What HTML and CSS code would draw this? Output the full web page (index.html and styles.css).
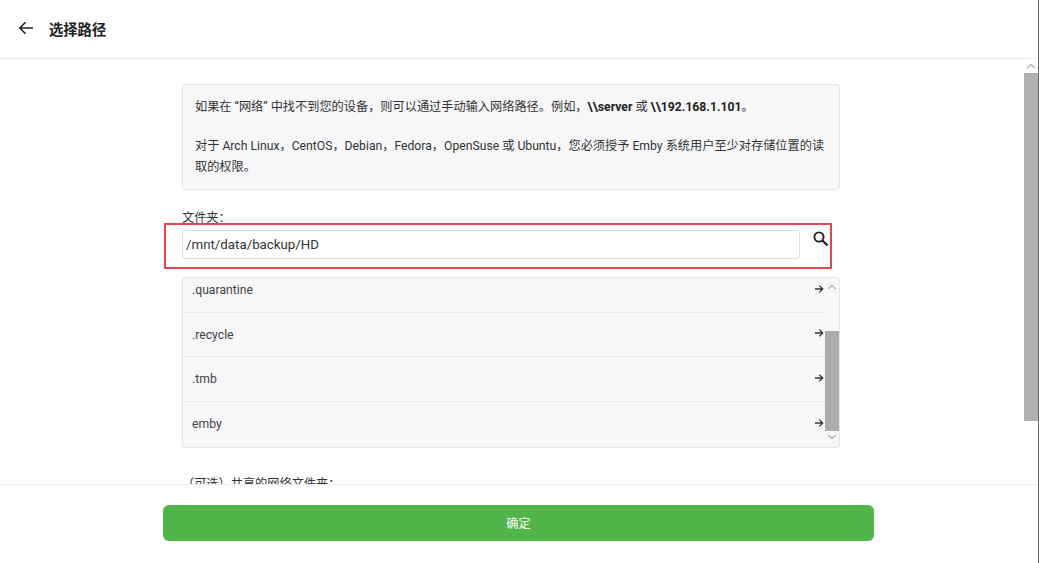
FILE: index.html
```html
<!DOCTYPE html>
<html lang="zh-CN">
<head>
<meta charset="utf-8">
<title>选择路径</title>
<link rel="stylesheet" href="styles.css">
</head>
<body>
<div class="page">
  <header class="header">
    <svg class="back" width="16" height="14" viewBox="0 0 16 14"><path d="M15 7H2M7.5 1.2 1.8 7l5.7 5.8" fill="none" stroke="#222" stroke-width="1.6"/></svg>
    <h1 class="title">选择路径</h1>
  </header>
  <div class="body">
    <main class="content">
      <div class="column">
        <div class="info">
          <p class="info-p">如果在 “网络” 中找不到您的设备，则可以通过手动输入网络路径。例如，<b>\\server</b> 或 <b>\\192.168.1.101</b>。</p>
          <p class="info-p">对于 Arch Linux，CentOS，Debian，Fedora，OpenSuse 或 Ubuntu，您必须授予 Emby 系统用户至少对存储位置的读取的权限。</p>
        </div>
        <label class="label">文件夹：</label>
        <div class="path-row">
          <div class="input">/mnt/data/backup/HD</div>
          <svg class="search" width="18" height="18" viewBox="0 0 18 18"><circle cx="7" cy="7" r="4.6" fill="none" stroke="#222" stroke-width="1.9"/><path d="m10.5 10.5 5 5" stroke="#222" stroke-width="2.3"/></svg>
          <div class="highlight"></div>
        </div>
        <div class="list">
          <div class="rows">
            <div class="row"><span>.quarantine</span><svg class="arrow" width="10" height="10" viewBox="0 0 10 10"><path d="M1 5h7.5M5.3 1.6 8.7 5 5.3 8.4" fill="none" stroke="#333" stroke-width="1.3"/></svg></div>
            <div class="row"><span>.recycle</span><svg class="arrow" width="10" height="10" viewBox="0 0 10 10"><path d="M1 5h7.5M5.3 1.6 8.7 5 5.3 8.4" fill="none" stroke="#333" stroke-width="1.3"/></svg></div>
            <div class="row"><span>.tmb</span><svg class="arrow" width="10" height="10" viewBox="0 0 10 10"><path d="M1 5h7.5M5.3 1.6 8.7 5 5.3 8.4" fill="none" stroke="#333" stroke-width="1.3"/></svg></div>
            <div class="row"><span>emby</span><svg class="arrow" width="10" height="10" viewBox="0 0 10 10"><path d="M1 5h7.5M5.3 1.6 8.7 5 5.3 8.4" fill="none" stroke="#333" stroke-width="1.3"/></svg></div>
          </div>
          <div class="bar bar-list">
            <svg class="chev" width="10" height="6" viewBox="0 0 10 6"><path d="M1 5 5 1.5 9 5" fill="none" stroke="#b5b5b5" stroke-width="1.5"/></svg>
            <div class="thumb thumb-list"></div>
            <svg class="chev" width="10" height="6" viewBox="0 0 10 6"><path d="M1 1 5 4.5 9 1" fill="none" stroke="#b5b5b5" stroke-width="1.5"/></svg>
          </div>
        </div>
        <label class="label label-share">（可选）共享的网络文件夹：</label>
      </div>
    </main>
    <div class="bar bar-page">
      <svg class="chev" width="10" height="6" viewBox="0 0 10 6"><path d="M1 5 5 1.5 9 5" fill="none" stroke="#b5b5b5" stroke-width="1.5"/></svg>
      <div class="thumb thumb-page"></div>
    </div>
  </div>
  <footer class="footer">
    <button class="ok">确定</button>
  </footer>
</div>
</body>
</html>
```
FILE: styles.css
```css
* { box-sizing: border-box; }
html, body { margin: 0; height: 100%; overflow: hidden; background: #fff; }
body { font-family: Roboto, "Noto Sans CJK SC", sans-serif; color: #333; }
.page { height: 563px; display: flex; flex-direction: column; border-right: 1px solid #666; }
.header { height: 59px; flex: none; display: flex; align-items: center; padding: 0 0 2px 18px; border-bottom: 1px solid #ebebeb; }
.back { flex: none; margin-right: 15px; }
.title { margin: 0; font-size: 14.3px; font-weight: 700; color: #222; }
.body { flex: 1; min-height: 0; display: flex; }
.content { flex: 1; min-width: 0; overflow: hidden; padding-top: 25px; }
.column { width: 658px; margin-left: 182px; }
.info { height: 106px; padding: 12px 12px 0; background: #f7f7f9; border: 1px solid #e6e6e6; border-radius: 3px; font-size: 12.2px; line-height: 21px; }
.info-p { margin: 0 0 18px; }
.info-p b { color: #222; }
.label { display: block; font-size: 12.2px; line-height: 16px; color: #333; }
.column > .label { margin-top: 20px; }
.path-row { position: relative; display: flex; align-items: flex-start; margin-top: 4px; }
.input { width: 618px; height: 29px; padding-left: 3px; font-size: 13.3px; line-height: 27px; color: #333; background: #fff; border: 1px solid #ddd; border-radius: 3px; }
.search { flex: none; margin: 0 0 0 12px; }
.highlight { position: absolute; left: -18px; top: -7px; width: 668px; height: 46px; border: 2px solid #e2474c; pointer-events: none; }
.list { display: flex; height: 171px; margin-top: 18px; overflow: hidden; background: #f7f7f9; border: 1px solid #e6e6e6; border-radius: 3px; }
.rows { flex: 1; min-width: 0; margin-top: -10px; }
.row { height: 44.5px; display: flex; align-items: center; justify-content: space-between; padding: 0 1px 0 9px; font-size: 12.2px; color: #444; border-bottom: 1px solid #e9e9e9; }
.row span { margin-top: 1px; }
.arrow { margin-bottom: 2px; }
.row:last-child { border-bottom: 0; }
.bar { flex: none; width: 14px; display: flex; flex-direction: column; align-items: center; }
.chev { flex: none; }
.thumb { width: 14px; background: #acacac; flex: none; }
.bar-list { padding-top: 6px; }
.thumb-list { height: 100px; margin: 41px 0 3px; }
.bar-page { padding-top: 4px; }
.thumb-page { height: 348px; margin-top: 4px; background: #b0b0b0; }
.column > .label-share { margin-top: 28px; }
.footer { height: 79px; flex: none; padding: 20px 0 0 163px; border-top: 1px solid #ebebeb; }
.ok { display: block; width: 711px; height: 36px; font: 12.2px Roboto, "Noto Sans CJK SC", sans-serif; color: #fff; background: #52b54b; border: 0; border-radius: 6px; }
```
